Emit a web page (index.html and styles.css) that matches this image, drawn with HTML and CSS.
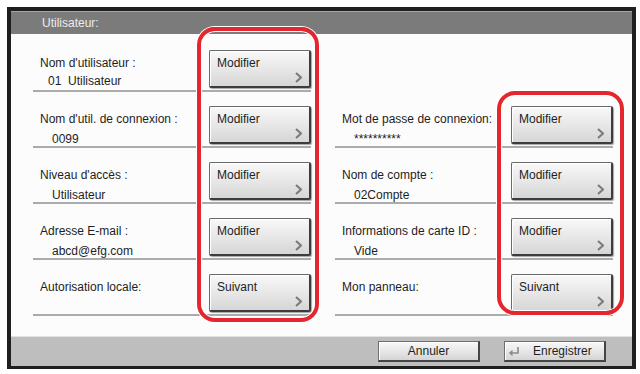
FILE: index.html
```html
<!DOCTYPE html>
<html lang="fr">
<head>
    <meta charset="UTF-8">
    <meta name="viewport" content="width=device-width, initial-scale=1.0">
    <title>Utilisateur</title>
    <link rel="stylesheet" href="styles.css">
</head>
<body>

    <div class="screen">
        <div class="title">Utilisateur:</div>

        <div class="content">
            <div class="col">
                <div class="row">
                    <div class="info">
                        <div class="label">Nom d'utilisateur :</div>
                        <div class="value value-first">01&nbsp; Utilisateur</div>
                    </div>
                    <button class="key">
                        <span>Modifier</span>
                        <svg class="chev" width="7" height="11" viewBox="0 0 7 11"><polyline points="1,1 6,5.5 1,10" fill="none" stroke="#7a7a7a" stroke-width="2"/></svg>
                    </button>
                </div>
                <div class="row">
                    <div class="info">
                        <div class="label">Nom d'util. de connexion :</div>
                        <div class="value">0099</div>
                    </div>
                    <button class="key">
                        <span>Modifier</span>
                        <svg class="chev" width="7" height="11" viewBox="0 0 7 11"><polyline points="1,1 6,5.5 1,10" fill="none" stroke="#7a7a7a" stroke-width="2"/></svg>
                    </button>
                </div>
                <div class="row">
                    <div class="info">
                        <div class="label">Niveau d'accès :</div>
                        <div class="value">Utilisateur</div>
                    </div>
                    <button class="key">
                        <span>Modifier</span>
                        <svg class="chev" width="7" height="11" viewBox="0 0 7 11"><polyline points="1,1 6,5.5 1,10" fill="none" stroke="#7a7a7a" stroke-width="2"/></svg>
                    </button>
                </div>
                <div class="row">
                    <div class="info">
                        <div class="label">Adresse E-mail :</div>
                        <div class="value">abcd@efg.com</div>
                    </div>
                    <button class="key">
                        <span>Modifier</span>
                        <svg class="chev" width="7" height="11" viewBox="0 0 7 11"><polyline points="1,1 6,5.5 1,10" fill="none" stroke="#7a7a7a" stroke-width="2"/></svg>
                    </button>
                </div>
                <div class="row">
                    <div class="info">
                        <div class="label">Autorisation locale:</div>
                    </div>
                    <button class="key">
                        <span>Suivant</span>
                        <svg class="chev" width="7" height="11" viewBox="0 0 7 11"><polyline points="1,1 6,5.5 1,10" fill="none" stroke="#7a7a7a" stroke-width="2"/></svg>
                    </button>
                </div>
            </div>

            <div class="col">
                <div class="row blank"></div>
                <div class="row">
                    <div class="info">
                        <div class="label">Mot de passe de connexion:</div>
                        <div class="value">**********</div>
                    </div>
                    <button class="key">
                        <span>Modifier</span>
                        <svg class="chev" width="7" height="11" viewBox="0 0 7 11"><polyline points="1,1 6,5.5 1,10" fill="none" stroke="#7a7a7a" stroke-width="2"/></svg>
                    </button>
                </div>
                <div class="row">
                    <div class="info">
                        <div class="label">Nom de compte :</div>
                        <div class="value">02Compte</div>
                    </div>
                    <button class="key">
                        <span>Modifier</span>
                        <svg class="chev" width="7" height="11" viewBox="0 0 7 11"><polyline points="1,1 6,5.5 1,10" fill="none" stroke="#7a7a7a" stroke-width="2"/></svg>
                    </button>
                </div>
                <div class="row">
                    <div class="info">
                        <div class="label">Informations de carte ID :</div>
                        <div class="value">Vide</div>
                    </div>
                    <button class="key">
                        <span>Modifier</span>
                        <svg class="chev" width="7" height="11" viewBox="0 0 7 11"><polyline points="1,1 6,5.5 1,10" fill="none" stroke="#7a7a7a" stroke-width="2"/></svg>
                    </button>
                </div>
                <div class="row">
                    <div class="info">
                        <div class="label">Mon panneau:</div>
                    </div>
                    <button class="key">
                        <span>Suivant</span>
                        <svg class="chev" width="7" height="11" viewBox="0 0 7 11"><polyline points="1,1 6,5.5 1,10" fill="none" stroke="#7a7a7a" stroke-width="2"/></svg>
                    </button>
                </div>
            </div>
        </div>

        <div class="footer">
            <button class="foot-btn">Annuler</button>
            <button class="foot-btn save">
                <svg class="enter" width="12" height="11" viewBox="0 0 12 11">
                    <path d="M10 1 V7 H4" fill="none" stroke="#8c8c8c" stroke-width="1.6"/>
                    <polygon points="4.5,3.8 0.8,7 4.5,10.2" fill="#8c8c8c"/>
                </svg>
                <span>Enregistrer</span>
            </button>
        </div>

        <!-- highlight rings drawn over the buttons -->
        <div class="ring ring-left"></div>
        <div class="ring ring-right"></div>
    </div>

</body>
</html>
```

FILE: styles.css
```css
body {
    margin: 0;
    background-color: #fff;
    font-family: "Liberation Sans", Arial, sans-serif;
    font-size: 12px;
    color: #1e1e1e;
}
.screen {
    position: relative;
    margin: 7px 0 0 7px;
    width: 629px;
    height: 362px;
    box-sizing: border-box;
    border: 4px solid #1f1f1f;
    border-bottom-width: 3px;
    background-color: #fcfcfc;
    display: flex;
    flex-direction: column;
}
.title {
    height: 23px;
    box-sizing: border-box;
    padding-left: 31px;
    line-height: 22px;
    background-color: #7b7b7b;
    border-top: 1px solid #a4a4a4;
    color: #ececec;
}
.content {
    flex: 1;
    display: grid;
    grid-template-columns: 278px 278px;
    column-gap: 24px;
    align-content: start;
    padding: 2px 0 0 22px;
}
.row {
    display: flex;
    align-items: flex-start;
    height: 56px;
    box-sizing: border-box;
    padding: 14px 0 2px 0;
    border-bottom: 2px solid #ababab;
}
.row.blank {
    border-bottom: none;
}
.info {
    flex: 1;
    padding: 6px 0 0 7px;
}
.label {
    line-height: 14px;
}
.value {
    line-height: 14px;
    margin-top: 6px;
    padding-left: 12px;
}
.value-first {
    margin-top: 4px;
    padding-left: 8px;
}
.key {
    width: 102px;
    height: 38px;
    box-sizing: border-box;
    display: flex;
    flex-direction: column;
    align-items: flex-start;
    padding: 5px 7px 3px 7px;
    border: 1px solid #6a6a6a;
    border-right: 2px solid #3c3c3c;
    border-bottom: 2px solid #3c3c3c;
    border-radius: 2px;
    background: linear-gradient(#f8f8f8, #e6e6e6 55%, #d6d6d6);
    box-shadow: inset 1px 1px 0 #fff, 1px 1px 1px rgba(0, 0, 0, 0.35);
    font-family: inherit;
    font-size: 12px;
    color: #1e1e1e;
    line-height: 14px;
}
.chev {
    margin-top: auto;
    align-self: flex-end;
}
.footer {
    height: 30px;
    box-sizing: border-box;
    display: flex;
    justify-content: flex-end;
    align-items: flex-start;
    gap: 24px;
    padding: 4px 26px 0 0;
    background-color: #bebebe;
    border-top: 1px solid #e2e2e2;
}
.foot-btn {
    width: 102px;
    height: 21px;
    box-sizing: border-box;
    display: flex;
    align-items: center;
    justify-content: center;
    padding: 0;
    border: 1px solid #6e6e6e;
    border-right: 2px solid #444;
    border-bottom: 2px solid #444;
    background: linear-gradient(#f8f8f8, #e4e4e4 60%, #d4d4d4);
    box-shadow: inset 1px 1px 0 #fff;
    font-family: inherit;
    font-size: 12px;
    color: #1e1e1e;
}
.foot-btn.save {
    justify-content: flex-start;
    padding-left: 3px;
}
.enter {
    margin-right: 13px;
}
.ring {
    position: absolute;
    box-sizing: border-box;
    border: 4px solid #e5262d;
    border-radius: 18px;
    box-shadow: 0 0 0 1px #fff, inset 0 0 0 1px #fff;
}
.ring-left {
    left: 186px;
    top: 16px;
    width: 122px;
    height: 295px;
}
.ring-right {
    left: 486px;
    top: 80px;
    width: 127px;
    height: 224px;
}
```
